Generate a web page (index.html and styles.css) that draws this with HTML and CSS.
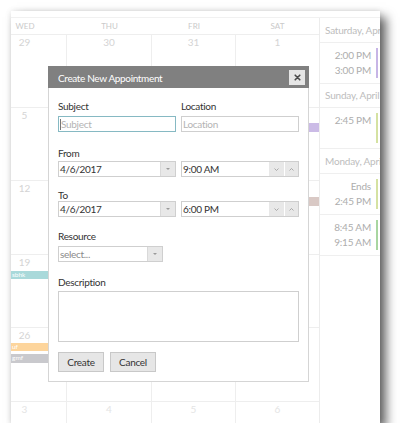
FILE: index.html
```html
<!DOCTYPE html>
<html>
<head>
<meta charset="utf-8">
<link rel="stylesheet" href="styles.css">
</head>
<body>
<div class="card">
  <div class="topstrip"></div>
  <div class="main">
    <div class="month">
      <div class="grid">
        <div class="dow">Wed</div><div class="dow">Thu</div><div class="dow">Fri</div><div class="dow">Sat</div>

        <div class="cell"><div class="num">29</div></div>
        <div class="cell"><div class="num">30</div></div>
        <div class="cell"><div class="num">31</div></div>
        <div class="cell"><div class="num">1</div></div>

        <div class="cell"><div class="num">5</div></div>
        <div class="cell"></div>
        <div class="cell"></div>
        <div class="cell"><div class="num">&nbsp;</div><div class="ev ev-purple"></div></div>

        <div class="cell"><div class="num">12</div></div>
        <div class="cell"></div>
        <div class="cell"></div>
        <div class="cell"><div class="num">&nbsp;</div><div class="ev ev-rose"></div></div>

        <div class="cell"><div class="num">19</div><div class="ev ev-teal">sbhk</div></div>
        <div class="cell"></div>
        <div class="cell"></div>
        <div class="cell"></div>

        <div class="cell"><div class="num">26</div><div class="ev ev-orange">uf</div><div class="ev ev-gray">gmf</div></div>
        <div class="cell"></div>
        <div class="cell"></div>
        <div class="cell"></div>

        <div class="cell next"><div class="num">3</div></div>
        <div class="cell next"><div class="num">4</div></div>
        <div class="cell next"><div class="num">5</div></div>
        <div class="cell next"><div class="num">6</div></div>
      </div>
    </div>
    <div class="agenda">
      <div class="ag-day">Saturday, April 1</div>
      <div class="ag-item">
        <div class="ag-times"><div>2:00 PM</div><div>3:00 PM</div></div>
        <span class="ag-bar bar-purple"></span>
      </div>
      <div class="ag-day short">Sunday, April 2</div>
      <div class="ag-item">
        <div class="ag-times"><div>2:45 PM</div></div>
        <span class="ag-bar bar-lime"></span>
      </div>
      <div class="ag-day">Monday, April 3</div>
      <div class="ag-item">
        <div class="ag-times"><div>Ends</div><div>2:45 PM</div></div>
        <span class="ag-bar bar-lime"></span>
      </div>
      <div class="ag-item">
        <div class="ag-times"><div>8:45 AM</div><div>9:15 AM</div></div>
        <span class="ag-bar bar-green"></span>
      </div>
    </div>
  </div>

  <div class="dialog">
    <div class="dlg-head">
      <span class="dlg-title">Create New Appointment</span>
      <span class="dlg-close"><svg width="7" height="7" viewBox="0 0 7 7"><path d="M1.2 1.2L5.8 5.8M5.8 1.2L1.2 5.8" stroke="#4a4a4a" stroke-width="1.6" stroke-linecap="round"/></svg></span>
    </div>
    <div class="dlg-body">
      <div class="row r-subject">
        <div class="field">
          <div class="lbl">Subject</div>
          <div class="box focus"><span class="caret"></span><span class="ph">Subject</span></div>
        </div>
        <div class="field">
          <div class="lbl">Location</div>
          <div class="box"><span class="ph">Location</span></div>
        </div>
      </div>

      <div class="row r-from">
        <div class="field">
          <div class="lbl">From</div>
          <div class="box"><span class="val">4/6/2017</span><span class="dd"><span class="tri"></span></span></div>
        </div>
        <div class="field">
          <div class="lbl">&nbsp;</div>
          <div class="box"><span class="val">9:00 AM</span>
            <span class="spin first"><svg width="5" height="3" viewBox="0 0 5 3"><path d="M0.5 0.5L2.5 2.5L4.5 0.5" fill="none" stroke="#999" stroke-width="0.8"/></svg></span>
            <span class="spin"><svg width="5" height="3" viewBox="0 0 5 3"><path d="M0.5 2.5L2.5 0.5L4.5 2.5" fill="none" stroke="#999" stroke-width="0.8"/></svg></span>
          </div>
        </div>
      </div>

      <div class="row r-to">
        <div class="field">
          <div class="lbl">To</div>
          <div class="box"><span class="val">4/6/2017</span><span class="dd"><span class="tri"></span></span></div>
        </div>
        <div class="field">
          <div class="lbl">&nbsp;</div>
          <div class="box"><span class="val">6:00 PM</span>
            <span class="spin first"><svg width="5" height="3" viewBox="0 0 5 3"><path d="M0.5 0.5L2.5 2.5L4.5 0.5" fill="none" stroke="#999" stroke-width="0.8"/></svg></span>
            <span class="spin"><svg width="5" height="3" viewBox="0 0 5 3"><path d="M0.5 2.5L2.5 0.5L4.5 2.5" fill="none" stroke="#999" stroke-width="0.8"/></svg></span>
          </div>
        </div>
      </div>

      <div class="field r-res">
        <div class="lbl">Resource</div>
        <div class="box select"><span class="ph dark">select...</span><span class="dd"><span class="tri"></span></span></div>
      </div>

      <div class="field r-desc">
        <div class="lbl">Description</div>
        <div class="textarea"></div>
      </div>

      <div class="actions">
        <button class="btn">Create</button>
        <button class="btn">Cancel</button>
      </div>
    </div>
  </div>
</div>
</body>
</html>
```

FILE: styles.css
```css
html, body {
  margin: 0;
  padding: 0;
  background: #ffffff;
}
body {
  font-family: "Lato", "Liberation Sans", sans-serif;
  font-size: 10px;
  color: #333;
}
.card {
  position: relative;
  width: 369px;
  height: 412px;
  margin: 11px 0 0 11px;
  background: #fff;
  box-shadow: 6px 6px 10px rgba(0, 0, 0, 0.62), 0 0 6px rgba(0, 0, 0, 0.1);
  display: flex;
  flex-direction: column;
}
.topstrip {
  height: 6px;
  border-bottom: 1px solid #f1f1f1;
  flex: none;
}
.main {
  display: flex;
  flex: 1;
  min-height: 0;
  overflow: hidden;
}
.month {
  width: 308px;
  flex: none;
  overflow: hidden;
}
.grid {
  display: grid;
  width: 336px;
  margin-left: -28px;
  grid-template-columns: 84px 85px 84px 83px;
  grid-template-rows: 17px 73px 73px 74px 73px 74px 40px;
}
.dow {
  text-transform: uppercase;
  font-size: 8px;
  color: #cacaca;
  text-align: center;
  line-height: 16px;
  border-bottom: 1px solid #eeeeee;
  box-sizing: border-box;
}
.cell {
  box-sizing: border-box;
  border-bottom: 1px solid #eeeeee;
  border-right: 1px solid #eeeeee;
  overflow: hidden;
}
.cell:nth-child(4n) {
  border-right: none;
}
.num {
  text-align: center;
  font-size: 10px;
  line-height: 12px;
  padding-top: 1px;
  color: #d4d4d4;
}
.next .num {
  color: #e4e4e4;
}
.ev {
  height: 8px;
  margin-top: 3px;
  font-size: 6.5px;
  line-height: 8px;
  color: #fff;
  padding-left: 29px;
  white-space: nowrap;
}
.ev + .ev {
  margin-top: 3px;
}
.ev-purple { background: #cbbbe6; height: 9px; margin-top: 2px; }
.ev-rose { background: #d9c9c5; height: 9px; }
.ev-teal { background: #a9d9da; }
.ev-orange { background: #fdd59c; margin-top: 2px; }
.ev-gray { background: #c9c9cd; height: 9px; }

.agenda {
  flex: 1;
  border-left: 1px solid #ececec;
  overflow: hidden;
}
.ag-day {
  height: 25px;
  box-sizing: border-box;
  border-bottom: 1px solid #efefef;
  padding-left: 5px;
  line-height: 24px;
  white-space: nowrap;
  color: #bdbdbd;
  font-size: 10px;
  letter-spacing: -0.2px;
}
.ag-day.short {
  height: 24px;
  line-height: 23px;
}
.ag-item {
  height: 41px;
  box-sizing: border-box;
  border-bottom: 1px solid #efefef;
  padding: 5px 2px 0 0;
  display: flex;
  justify-content: flex-end;
  align-items: flex-start;
  gap: 5px;
}
.ag-times {
  text-align: right;
  line-height: 15px;
  color: #adadad;
  white-space: nowrap;
  letter-spacing: -0.2px;
}
.ag-bar {
  width: 2px;
  height: 30px;
  flex: none;
}
.bar-purple { background: #c7b5e6; }
.bar-lime { background: #d5e2a2; }
.bar-green { background: #a8d6a1; }

/* dialog */
.dialog {
  position: absolute;
  left: 37px;
  top: 55px;
  width: 261px;
  box-sizing: border-box;
  border: 1px solid #d5d5d5;
  background: #fff;
  letter-spacing: -0.3px;
}
.dlg-head {
  height: 21px;
  margin: -1px -1px 0 -1px;
  padding-top: 1px;
  background: #808080;
  display: flex;
  align-items: center;
  padding-left: 10px;
  padding-right: 4px;
}
.dlg-title {
  color: #fff;
  font-size: 10px;
  letter-spacing: -0.35px;
  flex: 1;
}
.dlg-close {
  width: 16px;
  height: 15px;
  background: #e6e6e6;
  display: flex;
  align-items: center;
  justify-content: center;
}
.dlg-body {
  padding: 12px 9px 9px 9px;
}
.row {
  display: grid;
  grid-template-columns: 118px 118px;
  column-gap: 5px;
}
.lbl {
  line-height: 12px;
  color: #333;
}
.box {
  height: 16px;
  box-sizing: border-box;
  border: 1px solid #cfcfcf;
  display: flex;
  align-items: center;
  padding-left: 1px;
  white-space: nowrap;
}
.box.focus {
  border-color: #86b9c3;
}
.caret {
  width: 1px;
  height: 11px;
  background: #777;
}
.ph {
  color: #b4b4b4;
}
.ph.dark {
  color: #8a8a8a;
}
.val {
  color: #333;
  flex: 1;
}
.dd {
  width: 14px;
  height: 100%;
  background: #e8e8e8;
  border-left: 1px solid #d9d9d9;
  display: flex;
  align-items: center;
  justify-content: center;
  margin-left: auto;
}
.tri {
  width: 0;
  height: 0;
  border-left: 2px solid transparent;
  border-right: 2px solid transparent;
  border-top: 2px solid #9a9a9a;
}
.spin {
  width: 13px;
  height: 100%;
  background: #e8e8e8;
  margin-left: 1px;
  display: flex;
  align-items: center;
  justify-content: center;
}
.spin.first {
  width: 15px;
}
.select {
  width: 105px;
}
.r-subject .box { margin-top: 4px; }
.r-from { margin-top: 15px; }
.r-from .box { margin-top: 2px; }
.r-to { margin-top: 12px; }
.r-to .box { margin-top: 0; }
.r-res { margin-top: 13px; }
.r-res .box { margin-top: 4px; }
.r-desc { margin-top: 14px; }
.textarea {
  margin-top: 3px;
  height: 51px;
  box-sizing: border-box;
  border: 1px solid #cfcfcf;
}
.actions {
  margin-top: 10px;
  display: flex;
  gap: 6px;
}
.btn {
  width: 46px;
  height: 20px;
  padding: 0;
  background: #e6e6e6;
  border: 1px solid #c8c8c8;
  font-family: "Lato", "Liberation Sans", sans-serif;
  font-size: 10px;
  letter-spacing: -0.3px;
  color: #333;
}
```
